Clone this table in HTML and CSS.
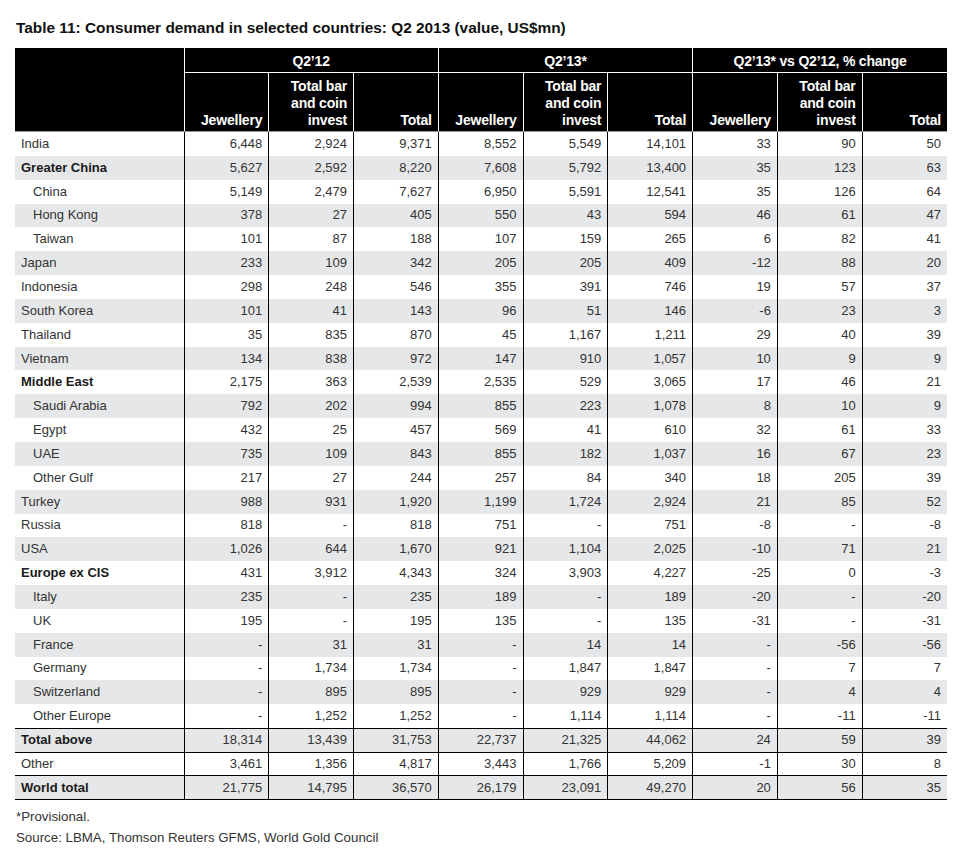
FILE: index.html
```html
<!DOCTYPE html>
<html lang="en">
<head>
<meta charset="utf-8">
<title>Table 11</title>
<link rel="stylesheet" href="styles.css">
</head>
<body>
<div class="page">
  <h1 class="title">Table 11: Consumer demand in selected countries: Q2 2013 (value, US$mn)</h1>
  <table class="data">
    <colgroup>
      <col class="c-label">
      <col><col><col><col><col><col><col><col><col>
    </colgroup>
    <thead>
      <tr class="h1">
        <th class="blank" rowspan="2"></th>
        <th colspan="3" class="grp">Q2’12</th>
        <th colspan="3" class="grp">Q2’13*</th>
        <th colspan="3" class="grp">Q2’13* vs Q2’12, % change</th>
      </tr>
      <tr class="h2">
        <th>Jewellery</th><th>Total bar and coin invest</th><th>Total</th>
        <th>Jewellery</th><th>Total bar and coin invest</th><th>Total</th>
        <th>Jewellery</th><th>Total bar and coin invest</th><th>Total</th>
      </tr>
    </thead>
    <tbody>
      <tr><td>India</td><td>6,448</td><td>2,924</td><td>9,371</td><td>8,552</td><td>5,549</td><td>14,101</td><td>33</td><td>90</td><td>50</td></tr>
      <tr class="alt"><td class="b">Greater China</td><td>5,627</td><td>2,592</td><td>8,220</td><td>7,608</td><td>5,792</td><td>13,400</td><td>35</td><td>123</td><td>63</td></tr>
      <tr><td class="ind">China</td><td>5,149</td><td>2,479</td><td>7,627</td><td>6,950</td><td>5,591</td><td>12,541</td><td>35</td><td>126</td><td>64</td></tr>
      <tr class="alt"><td class="ind">Hong Kong</td><td>378</td><td>27</td><td>405</td><td>550</td><td>43</td><td>594</td><td>46</td><td>61</td><td>47</td></tr>
      <tr><td class="ind">Taiwan</td><td>101</td><td>87</td><td>188</td><td>107</td><td>159</td><td>265</td><td>6</td><td>82</td><td>41</td></tr>
      <tr class="alt"><td>Japan</td><td>233</td><td>109</td><td>342</td><td>205</td><td>205</td><td>409</td><td>-12</td><td>88</td><td>20</td></tr>
      <tr><td>Indonesia</td><td>298</td><td>248</td><td>546</td><td>355</td><td>391</td><td>746</td><td>19</td><td>57</td><td>37</td></tr>
      <tr class="alt"><td>South Korea</td><td>101</td><td>41</td><td>143</td><td>96</td><td>51</td><td>146</td><td>-6</td><td>23</td><td>3</td></tr>
      <tr><td>Thailand</td><td>35</td><td>835</td><td>870</td><td>45</td><td>1,167</td><td>1,211</td><td>29</td><td>40</td><td>39</td></tr>
      <tr class="alt"><td>Vietnam</td><td>134</td><td>838</td><td>972</td><td>147</td><td>910</td><td>1,057</td><td>10</td><td>9</td><td>9</td></tr>
      <tr><td class="b">Middle East</td><td>2,175</td><td>363</td><td>2,539</td><td>2,535</td><td>529</td><td>3,065</td><td>17</td><td>46</td><td>21</td></tr>
      <tr class="alt"><td class="ind">Saudi Arabia</td><td>792</td><td>202</td><td>994</td><td>855</td><td>223</td><td>1,078</td><td>8</td><td>10</td><td>9</td></tr>
      <tr><td class="ind">Egypt</td><td>432</td><td>25</td><td>457</td><td>569</td><td>41</td><td>610</td><td>32</td><td>61</td><td>33</td></tr>
      <tr class="alt"><td class="ind">UAE</td><td>735</td><td>109</td><td>843</td><td>855</td><td>182</td><td>1,037</td><td>16</td><td>67</td><td>23</td></tr>
      <tr><td class="ind">Other Gulf</td><td>217</td><td>27</td><td>244</td><td>257</td><td>84</td><td>340</td><td>18</td><td>205</td><td>39</td></tr>
      <tr class="alt"><td>Turkey</td><td>988</td><td>931</td><td>1,920</td><td>1,199</td><td>1,724</td><td>2,924</td><td>21</td><td>85</td><td>52</td></tr>
      <tr><td>Russia</td><td>818</td><td>-</td><td>818</td><td>751</td><td>-</td><td>751</td><td>-8</td><td>-</td><td>-8</td></tr>
      <tr class="alt"><td>USA</td><td>1,026</td><td>644</td><td>1,670</td><td>921</td><td>1,104</td><td>2,025</td><td>-10</td><td>71</td><td>21</td></tr>
      <tr><td class="b">Europe ex CIS</td><td>431</td><td>3,912</td><td>4,343</td><td>324</td><td>3,903</td><td>4,227</td><td>-25</td><td>0</td><td>-3</td></tr>
      <tr class="alt"><td class="ind">Italy</td><td>235</td><td>-</td><td>235</td><td>189</td><td>-</td><td>189</td><td>-20</td><td>-</td><td>-20</td></tr>
      <tr><td class="ind">UK</td><td>195</td><td>-</td><td>195</td><td>135</td><td>-</td><td>135</td><td>-31</td><td>-</td><td>-31</td></tr>
      <tr class="alt"><td class="ind">France</td><td>-</td><td>31</td><td>31</td><td>-</td><td>14</td><td>14</td><td>-</td><td>-56</td><td>-56</td></tr>
      <tr><td class="ind">Germany</td><td>-</td><td>1,734</td><td>1,734</td><td>-</td><td>1,847</td><td>1,847</td><td>-</td><td>7</td><td>7</td></tr>
      <tr class="alt"><td class="ind">Switzerland</td><td>-</td><td>895</td><td>895</td><td>-</td><td>929</td><td>929</td><td>-</td><td>4</td><td>4</td></tr>
      <tr><td class="ind">Other Europe</td><td>-</td><td>1,252</td><td>1,252</td><td>-</td><td>1,114</td><td>1,114</td><td>-</td><td>-11</td><td>-11</td></tr>
      <tr class="alt tot"><td class="b">Total above</td><td>18,314</td><td>13,439</td><td>31,753</td><td>22,737</td><td>21,325</td><td>44,062</td><td>24</td><td>59</td><td>39</td></tr>
      <tr class="tot"><td>Other</td><td>3,461</td><td>1,356</td><td>4,817</td><td>3,443</td><td>1,766</td><td>5,209</td><td>-1</td><td>30</td><td>8</td></tr>
      <tr class="alt tot last"><td class="b">World total</td><td>21,775</td><td>14,795</td><td>36,570</td><td>26,179</td><td>23,091</td><td>49,270</td><td>20</td><td>56</td><td>35</td></tr>
    </tbody>
  </table>
  <div class="notes">
    <p>*Provisional.</p>
    <p>Source: LBMA, Thomson Reuters GFMS, World Gold Council</p>
  </div>
</div>
</body>
</html>
```

FILE: styles.css
```css
html, body {
  margin: 0;
  padding: 0;
  background: #ffffff;
}

.page {
  padding: 19px 12px 0 15px;
  font-family: "Liberation Sans", Arial, sans-serif;
  color: #333333;
}

.title {
  margin: 0 0 11px 1px;
  font-size: 15.4px;
  line-height: 18px;
  font-weight: bold;
  color: #111111;
}

.data {
  width: 932px;
  table-layout: fixed;
  border-collapse: collapse;
  font-size: 13px;
}

.data col.c-label {
  width: 169px;
}

.data thead th {
  background: #000000;
  color: #ffffff;
  font-size: 14px;
  letter-spacing: -0.2px;
  font-weight: bold;
  padding: 0 6px;
}

.data .h1 th {
  height: 22px;
  padding-top: 2px;
  text-align: center;
  vertical-align: middle;
  line-height: 17px;
}

.data .h1 th.grp {
  border-bottom: 1px solid #ffffff;
  border-left: 1px solid #ffffff;
}

.data .h2 th {
  height: 56px;
  text-align: right;
  vertical-align: bottom;
  line-height: 17px;
  padding-bottom: 2px;
  border-left: 1px solid #ffffff;
  border-bottom: 1px solid #9a9a9a;
}

.data .h1 th.blank {
  border-bottom: 1px solid #9a9a9a;
}

.data tbody td {
  height: 23.85px;
  padding: 0 6px;
  line-height: 16px;
  text-align: right;
  vertical-align: middle;
  border-left: 1px solid #000000;
  white-space: nowrap;
}

.data tbody td:first-child {
  text-align: left;
  border-left: none;
}

.data tbody td.ind {
  padding-left: 18px;
}

.data tbody td.b {
  font-weight: bold;
  color: #1a1a1a;
}

.data tbody tr.alt td {
  background: #e6e7e8;
}

.data tbody tr.tot td {
  border-top: 1px solid #000000;
  height: 22.6px;
}

.data tbody tr.last td {
  border-bottom: 1px solid #000000;
}

.notes {
  margin-top: 6px;
  font-size: 13.3px;
  line-height: 21px;
  color: #333333;
}

.notes p {
  margin: 0;
  padding-left: 1px;
}
```
